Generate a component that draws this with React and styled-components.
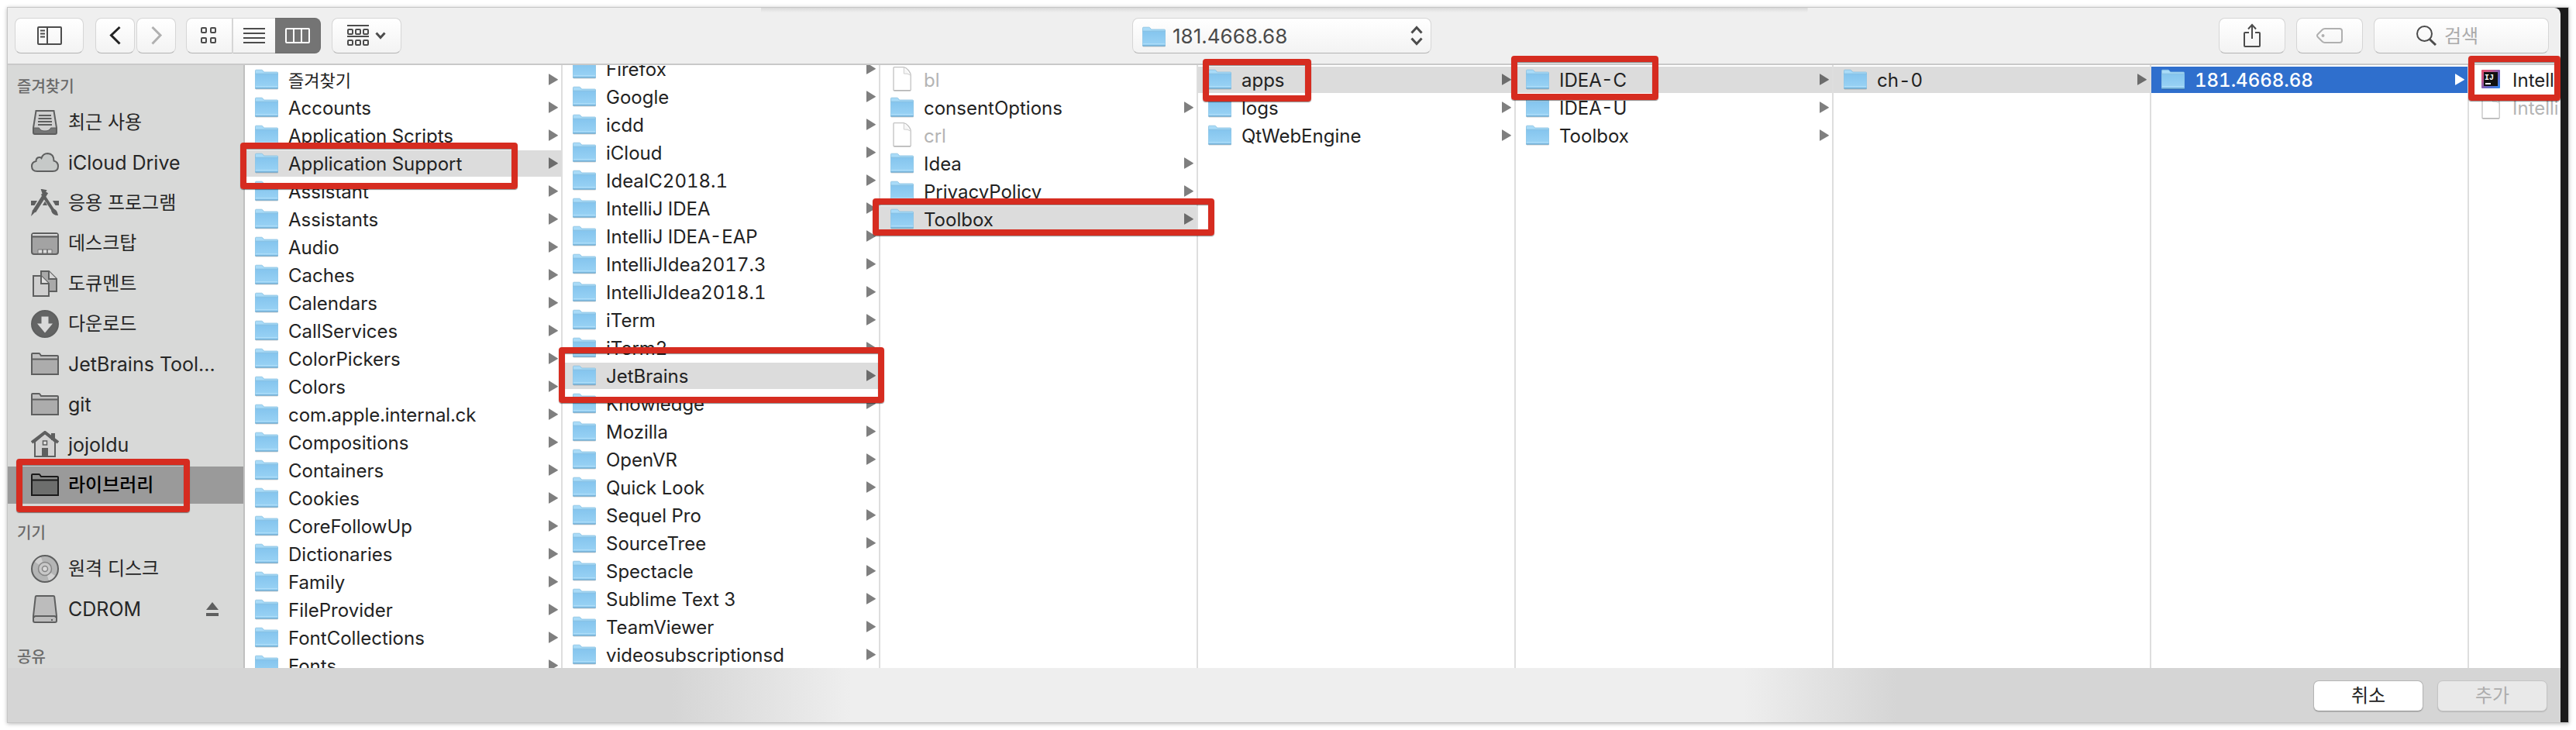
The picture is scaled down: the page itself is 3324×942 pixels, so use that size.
import React from "react";
import styled, { createGlobalStyle, css } from "styled-components";

const GlobalStyle = createGlobalStyle`
  *, *::before, *::after { box-sizing: border-box; }
  body { margin: 0; background: #fff; }
  body, button, input, select {
    font-family: Inter, "Noto Sans CJK KR", sans-serif;
  }
`;

const Page = styled.div`
  height: 100vh;
  min-height: 400px;
  padding: 10px;
  overflow: hidden;
`;

const Window = styled.main`
  height: 100%;
  display: flex;
  flex-direction: column;
  background: #1b1b1b;
  border-right: 10px solid #1b1b1b;
  box-shadow: 0 0 0 1px #c6c6c6, 0 1px 5px 1px rgba(0, 0, 0, 0.28);
`;

/* Toolbar */

const Toolbar = styled.header`
  flex: none;
  height: 74px;
  display: grid;
  grid-template-columns: 1fr auto 1fr;
  align-items: center;
  padding: 0 15px 0 9px;
  border-bottom: 2px solid #c9c9c9;
  border-top-right-radius: 8px;
  background:
    linear-gradient(#d9d9d9, #efefef) 50% 0 / 41% 6px no-repeat,
    #efefef;
`;

const ToolGroup = styled.div`
  display: flex;
  gap: ${(p) => p.$gap}px;
  justify-content: ${(p) => (p.$end ? "flex-end" : "flex-start")};
`;

const bezel = css`
  height: 46px;
  border: 1px solid #d6d6d6;
  border-bottom-color: #b4b4b4;
  border-radius: 8px;
  background: linear-gradient(#fff, #f3f3f3);
`;

const ToolButton = styled.button`
  ${bezel}
  width: ${(p) => p.$width}px;
  display: flex;
  align-items: center;
  justify-content: center;
  gap: 8px;
  padding: 0;
  color: ${(p) => (p.$dim ? "#b0b0b0" : "#4c4c4c")};
`;

const NavPair = styled.div`
  display: flex;
  gap: 2px;
  margin: 0 13px 0 15px;
`;

const Segments = styled.div`
  display: flex;
  margin-right: 14px;
`;

const Segment = styled(ToolButton)`
  border-radius: 0;
  border-left-width: ${(p) => (p.$first ? 1 : 0)}px;
  border-right-width: ${(p) => (p.$first ? 2 : p.$on ? 1 : 0)}px;
  ${(p) => p.$first && "border-radius: 8px 0 0 8px;"}
  ${(p) =>
    p.$on &&
    `border-radius: 0 8px 8px 0; background: #747474; border-color: #6c6c6c; color: #fff;`}
`;

const PathField = styled.label`
  ${bezel}
  width: 386px;
  display: flex;
  align-items: center;
  gap: 9px;
  padding: 0 10px 0 12px;
`;

const PathSelect = styled.select`
  appearance: none;
  flex: 1;
  min-width: 0;
  height: 40px;
  padding: 0;
  border: 0;
  outline: 0;
  background: transparent;
  color: #4a4a4a;
  font-size: 26px;
`;

const SearchField = styled.label`
  ${bezel}
  width: 226px;
  display: flex;
  align-items: center;
  gap: 10px;
  padding: 0 8px 0 54px;
  color: #4c4c4c;
`;

const SearchInput = styled.input`
  flex: 1;
  min-width: 0;
  height: 40px;
  padding: 0;
  border: 0;
  outline: 0;
  background: transparent;
  font-size: 24px;
  &::placeholder { color: #ababab; opacity: 1; }
`;

/* Sidebar */

const Body = styled.div`
  position: relative;
  flex: 1;
  min-height: 0;
  display: flex;
`;

const Sidebar = styled.nav`
  flex: none;
  width: 306px;
  padding-top: 6px;
  overflow: hidden;
  border-right: 2px solid #bfbfbf;
  background: #d8d9d8;
`;

const Section = styled.section`
  & + & { margin-top: 16px; }
`;

const SectionTitle = styled.h2`
  margin: 0;
  padding-left: 12px;
  height: 44px;
  line-height: 44px;
  font-size: 20px;
  font-weight: 500;
  color: #6a6a6a;
`;

const List = styled.ul`
  margin: 0;
  padding: 0;
  list-style: none;
`;

const Place = styled.li`
  display: flex;
  align-items: center;
  height: 48px;
  margin-bottom: 4px;
  padding: 0 32px 0 30px;
  background: ${(p) => (p.$on ? "#9a9a9a" : "transparent")};
  color: ${(p) => (p.$on ? "#1a1a1a" : "#5e5f5f")};
`;

const PlaceLink = styled.a`
  flex: 1;
  display: flex;
  align-items: center;
  gap: 12px;
  line-height: 48px;
  font-size: ${(p) => (p.$ko ? 24 : 25)}px;
  font-weight: ${(p) => (p.$on ? 500 : 400)};
  white-space: nowrap;
  text-decoration: none;
  color: inherit;
  span { color: ${(p) => (p.$on ? "#000" : "#262626")}; }
`;

const EjectButton = styled.button`
  display: flex;
  padding: 0;
  border: 0;
  background: none;
  color: inherit;
`;

/* Browser columns */

const Columns = styled.div`
  flex: 1;
  min-width: 0;
  display: flex;
  overflow: hidden;
  background: #fff;
`;

const Column = styled.section`
  flex: none;
  width: 410px;
  overflow: hidden;
  border-right: 2px solid #dedede;
  &:last-child { flex: 1; width: auto; min-width: 0; border-right: 0; }
`;

const Entries = styled(List)`
  margin-top: ${(p) => 2 - p.$scrolled}px;
`;

const Entry = styled.li`
  margin-bottom: 2px;
`;

const rowTone = {
  plain: "background: transparent; color: #222;",
  dim: "background: transparent; color: #b4b4b4;",
  path: "background: #dcdcdc; color: #222;",
  active: "background: #2f6fcd; color: #fff; font-weight: 500;",
};

const EntryButton = styled.button`
  width: 100%;
  height: 34px;
  display: flex;
  align-items: center;
  gap: 13px;
  padding: 0 4px 0 13px;
  border: 0;
  text-align: left;
  line-height: 34px;
  font-size: ${(p) => (p.$ko ? 22 : 24)}px;
  font-variant-numeric: tabular-nums;
  white-space: nowrap;
  ${(p) => rowTone[p.$tone]}
`;

const IconSlot = styled.span`
  flex: none;
  width: 30px;
  height: 34px;
  display: flex;
  justify-content: center;
  svg { display: block; overflow: visible; }
`;

const EntryName = styled.span`
  flex: 1;
  min-width: 0;
  padding-top: 2px;
  overflow: hidden;
`;

/* Footer */

const Footer = styled.footer`
  flex: none;
  height: 70px;
  display: flex;
  align-items: center;
  justify-content: flex-end;
  gap: 18px;
  padding: 2px 17px 0 0;
  background: linear-gradient(
    90deg,
    #d5d5d5 26%,
    #eee 33%,
    #eee 68%,
    #d5d5d5 74%
  );
`;

const DialogButton = styled.button`
  width: 142px;
  height: 40px;
  padding: 0;
  border: 1px solid #b4b4b4;
  border-bottom-color: #989898;
  border-radius: 7px;
  background: #fff;
  font-size: 24px;
  line-height: 36px;
  color: #222;
  box-shadow: 0 1px 1px rgba(0, 0, 0, 0.14);
  &:disabled {
    background: #e9e9e9;
    border-color: #c4c4c4;
    color: #adadad;
  }
`;

/* Red callout frames drawn over the browser */

const Callout = styled.div`
  position: absolute;
  left: ${(p) => p.$x}px;
  top: ${(p) => p.$y}px;
  width: ${(p) => p.$w}px;
  height: ${(p) => p.$h}px;
  border: 8px solid #d62c20;
  border-radius: 4px;
  pointer-events: none;
  box-shadow: 0 1px 1px rgba(0, 0, 0, 0.45), inset 0 1px 1px rgba(0, 0, 0, 0.45);
`;

/* Icons */

const Folder = ({ size = 30 }) => (
  <svg width={size} height={size} viewBox="0 0 30 30" aria-hidden="true">
    <defs>
      <linearGradient id="folderFace" x1="0" y1="0" x2="0" y2="1">
        <stop offset="0" stopColor="#85c5ee" />
        <stop offset="1" stopColor="#9ad3f5" />
      </linearGradient>
    </defs>
    <path d="M1 28.8H29.5" stroke="#000" strokeOpacity=".18" strokeWidth="1.4" />
    <path d="M.5 28V5.2Q.5 4.2 1.5 4.2H8.6Q9.4 4.2 10 5L11.6 7H28.5Q29.5 7 29.5 8V28Z" fill="#a9dbf8" stroke="#86bfe0" strokeWidth=".8" />
    <path d="M.5 9.6H29.5V28H.5Z" fill="url(#folderFace)" />
    <path d="M.5 9.2H29.5" stroke="#79b5da" strokeWidth=".8" />
    <path d="M1 25.5H29" stroke="#b4e0f9" strokeWidth=".8" />
    <path d="M.2 28H29.8" stroke="#6ba6cb" strokeWidth="1.2" />
  </svg>
);

const Doc = () => (
  <svg width="24" height="32" viewBox="0 0 24 32" aria-hidden="true">
    <path d="M1 1.5Q1 .7 1.8 .7H14Q17 1 20 4.5Q23.2 8.5 23.2 11V30Q23.2 30.7 22.5 30.7H1.7Q1 30.7 1 30Z" fill="#fff" stroke="#c2c2c2" strokeWidth="1.3" />
    <path d="M14.3 1V9Q19 8.5 23 11" fill="#f6f6f6" stroke="#cfcfcf" />
    <path d="M1.5 31H22.8" stroke="#a8a8a8" />
  </svg>
);

const IdeaApp = () => (
  <svg width="24" height="30" viewBox="0 0 24 30" aria-hidden="true">
    <defs>
      <linearGradient id="ideaEdge" x1="0" y1="0" x2="1" y2="1">
        <stop offset="0" stopColor="#e8506a" />
        <stop offset=".3" stopColor="#c2588c" />
        <stop offset=".6" stopColor="#6a62c0" />
        <stop offset="1" stopColor="#2c8cf4" />
      </linearGradient>
    </defs>
    <rect y="4" width="24" height="24" rx="1" fill="url(#ideaEdge)" />
    <rect x="3" y="7" width="18" height="18" fill="#111" />
    <text x="4" y="17" fontFamily="Liberation Mono, monospace" fontWeight="700" fontSize="10" fill="#fff">IJ</text>
    <rect x="5" y="21" width="7" height="2" fill="#fff" />
  </svg>
);

const Arrow = () => (
  <svg width="12" height="16" viewBox="0 0 12 16" aria-hidden="true">
    <path d="M0 .8Q0 0 .8 .5L11.6 7.3Q12.3 7.8 11.6 8.3L.8 14.4Q0 15 0 14Z" fill="currentColor" />
  </svg>
);

const ArrowTone = styled.span`
  display: flex;
  color: ${(p) => (p.$tone === "active" ? "#fff" : p.$tone === "path" ? "#6c6c6c" : "#7f7f7f")};
`;

const Line = ({ w, h, sw = 2, children }) => (
  <svg width={w} height={h} viewBox={`0 0 ${w} ${h}`} fill="none" stroke="currentColor" strokeWidth={sw} aria-hidden="true">
    {children}
  </svg>
);

const SidebarToggleIcon = () => (
  <Line w={32} h={24}>
    <rect x="1" y="1" width="30" height="22" rx="1" />
    <path d="M13 1V23M4 5.5H10M4 9.5H10M4 13.5H10" />
  </Line>
);

const BackIcon = () => (
  <Line w={16} h={26} sw={3}>
    <path d="M13.5 2L2.5 12.5L13.5 23.5" stroke="#222" />
  </Line>
);

const ForwardIcon = () => (
  <Line w={16} h={26} sw={3}>
    <path d="M2.5 2L13 12.5L2.5 23.5" />
  </Line>
);

const GridIcon = () => (
  <Line w={22} h={22}>
    {[1, 13].map((x) =>
      [1, 14].map((y) => <rect key={`${x}${y}`} x={x} y={y} width="6" height="6" rx="1" />)
    )}
  </Line>
);

const ListIcon = () => (
  <Line w={28} h={20}>
    <path d="M0 1H28M0 7H28M0 13H28M0 19H28" />
  </Line>
);

const ColumnsIcon = () => (
  <Line w={32} h={20}>
    <rect x="1" y="1" width="30" height="18" rx="1" />
    <path d="M11 1V19M21 1V19" />
  </Line>
);

const ArrangeIcon = () => (
  <Line w={28} h={28}>
    <path d="M0 1H28M0 15H28" />
    {[1, 11, 21].map((x) =>
      [6, 20].map((y) => <rect key={`${x}${y}`} x={x} y={y} width="6" height="6" rx="1" />)
    )}
  </Line>
);

const ChevronIcon = () => (
  <Line w={14} h={10} sw={3}>
    <path d="M1.5 1.5L7 7.5L12.5 1.5" />
  </Line>
);

const UpDownIcon = () => (
  <Line w={16} h={26} sw={3}>
    <path d="M1.5 9.5L8 2.5L14.5 9.5M1.5 16.5L8 23.5L14.5 16.5" stroke="#4c4c4c" />
  </Line>
);

const ShareIcon = () => (
  <Line w={22} h={32}>
    <path d="M7 12H2Q1 12 1 13V29Q1 30 2 30H20Q21 30 21 29V13Q21 12 20 12H15M11 20V2M6 7.5L11 2L16 7.5" />
  </Line>
);

const TagIcon = () => (
  <Line w={34} h={20}>
    <path d="M11 1H30Q33 1 33 4V16Q33 19 30 19H11Q9 19 7.5 17.5L2 12Q0 10 2 8L7.500 2.500Q9 1 11 1Z" />
    <circle cx="8.500" cy="10" r="2" fill="currentColor" stroke="none" />
  </Line>
);

const SearchIcon = () => (
  <Line w={26} h={26}>
    <circle cx="10.500" cy="10.500" r="9.500" />
    <path d="M17 17.500L25 25" strokeWidth="3" />
  </Line>
);

const placeShapes = {
  recent: (
    <>
      <path d="M6.500 3H29.500L33 25V31Q33 33 31 33H5Q3 33 3 31V25Z" fill="#d0d0d0" />
      <path d="M3 25H10.500Q12 29 18 29Q24 29 25.500 25H33V31Q33 33 31 33H5Q3 33 3 31Z" fill="currentColor" fillOpacity=".8" strokeWidth="1" />
      <path d="M10 9H26M9.500 13H26.500M9 17H27M9 21H27" />
    </>
  ),
  cloud: (
    <path d="M8 29Q1 29 1 22.500Q1 17 6.500 16Q6.500 11.500 10.500 11Q12.500 10.800 13.500 12Q15.500 6 21.500 6Q29.500 6.500 29.500 15.500Q35 17 35 22.500Q35 29 28 29Z" fill="#c6c9c8" />
  ),
  apps: (
    <>
      <path d="M0 18H36" strokeWidth="6" />
      <path d="M19 5L4.500 30" stroke="#d8d9d8" strokeWidth="9" />
      <path d="M17 5L31.500 30" stroke="#d8d9d8" strokeWidth="9" />
      <path d="M14.500 6L29 28" strokeWidth="4" />
      <path d="M20 4L4 29" strokeWidth="5" />
      <path d="M28 25Q34 26 35 34Q28 34 26 28Z" fill="currentColor" stroke="none" />
      <path d="M2 27L6 29L0 35Z" fill="currentColor" stroke="none" />
      <path d="M14 1L19 2L16 7Z" fill="currentColor" />
    </>
  ),
  desktop: (
    <>
      <rect x="1" y="5" width="34" height="27" rx="3" fill="#a3a3a3" />
      <path d="M2 6H34V8H2Z" fill="#dadada" stroke="none" />
      <path d="M1 9.500H35" />
      <path d="M9 26H27V31H9Z" fill="#dcdcdc" stroke="#777" strokeWidth="1" />
      <path d="M15 26V31M21 26V31" strokeWidth="1.500" />
    </>
  ),
  documents: (
    <>
      <path d="M13 2H23L33 12V28H13Z" fill="#a9a9a9" />
      <path d="M23 2V12H33" fill="#d6d6d6" />
      <path d="M3 8H13L23 18V34H3Z" fill="#cfcfcf" />
      <path d="M13 8V18H23" fill="#e0e0e0" />
    </>
  ),
  downloads: (
    <>
      <circle cx="18" cy="18" r="17" fill="#636464" />
      <path d="M13.500 8.500H22.500V17.500H28L18 29.500L8 17.500H13.500Z" fill="#dadada" stroke="none" />
    </>
  ),
  folder: (
    <>
      <path d="M1 31V5Q1 4 2 4H10Q11 4 11.500 4.800L13 7H34Q35 7 35 8V31Z" fill="#c0c0c0" />
      <path d="M1 11.500H35V31H1Z" fill="#acacac" />
    </>
  ),
  openFolder: (
    <>
      <path d="M1 31V5Q1 4 2 4H10Q11 4 11.500 4.800L13 7H34Q35 7 35 8V31Z" fill="#8a8b8a" />
      <path d="M1 11.500H35V31H1Z" fill="#6d6e6d" />
    </>
  ),
  home: (
    <>
      <path d="M5 14L18 3L31 14V33H5Z" fill="#d2d2d2" />
      <path d="M1 15L18 2L35 15" strokeWidth="4" />
      <path d="M28.500 3V12" strokeWidth="5" />
      <path d="M14 22H22V33H14Z" fill="currentColor" stroke="none" />
      <rect x="15.500" y="13" width="5" height="5" fill="#e4e4e4" strokeWidth="1.500" />
    </>
  ),
  disc: (
    <>
      <circle cx="18" cy="18" r="17" fill="#b4b5b5" />
      <path d="M18 18L5 9Q8 4 13 3Z" fill="#cfcfcf" stroke="none" />
      <path d="M18 18L31 27Q28 32 23 33Z" fill="#d2d2d2" stroke="none" />
      <circle cx="18" cy="18" r="8.500" fill="#c8c8c8" strokeWidth="1.500" stroke="#858585" />
      <circle cx="18" cy="18" r="3.500" fill="#dadada" strokeWidth="1.500" stroke="#858585" />
    </>
  ),
  drive: (
    <>
      <path d="M7 1H29Q30 1 30.200 2L33 27V33Q33 35 31 35H5Q3 35 3 33V27L5.800 2Q6 1 7 1Z" fill="#bcbcbc" />
      <path d="M4 29Q4 27 6 27H30Q32 27 32 29" />
      <rect x="26" y="31" width="2" height="2" fill="currentColor" stroke="none" />
    </>
  ),
};

const PlaceIcon = ({ kind }) => (
  <Line w={36} h={36}>{placeShapes[kind]}</Line>
);

const EjectIcon = () => (
  <svg width="16" height="18" viewBox="0 0 16 18" fill="currentColor" aria-hidden="true">
    <path d="M8 0L16 10H0ZM0 14H16V18H0Z" />
  </svg>
);

/* Data */

const hasHangul = (s) => /[\uac00-\ud7a3]/.test(s);

const sections = [
  {
    title: "즐겨찾기",
    places: [
      ["recent", "최근 사용"],
      ["cloud", "iCloud Drive"],
      ["apps", "응용 프로그램"],
      ["desktop", "데스크탑"],
      ["documents", "도큐멘트"],
      ["downloads", "다운로드"],
      ["folder", "JetBrains Tool..."],
      ["folder", "git"],
      ["home", "jojoldu"],
      ["openFolder", "라이브러리"],
    ],
  },
  { title: "기기", places: [["disc", "원격 디스크"], ["drive", "CDROM"]] },
  { title: "공유", places: [] },
];

const folders = (names) => names.map((name) => ({ name }));

const columns = [
  {
    label: "라이브러리",
    selected: "Application Support",
    entries: folders([
      "즐겨찾기", "Accounts", "Application Scripts", "Application Support", "Assistant",
      "Assistants", "Audio", "Caches", "Calendars", "CallServices", "ColorPickers",
      "Colors", "com.apple.internal.ck", "Compositions", "Containers", "Cookies",
      "CoreFollowUp", "Dictionaries", "Family", "FileProvider", "FontCollections", "Fonts",
    ]),
  },
  {
    label: "Application Support",
    scrolled: 14,
    selected: "JetBrains",
    entries: folders([
      "Firefox", "Google", "icdd", "iCloud", "IdeaIC2018.1", "IntelliJ IDEA",
      "IntelliJ IDEA-EAP", "IntelliJIdea2017.3", "IntelliJIdea2018.1", "iTerm", "iTerm2",
      "JetBrains", "Knowledge", "Mozilla", "OpenVR", "Quick Look", "Sequel Pro",
      "SourceTree", "Spectacle", "Sublime Text 3", "TeamViewer", "videosubscriptionsd",
    ]),
  },
  {
    label: "JetBrains",
    selected: "Toolbox",
    entries: [
      { name: "bl", kind: "doc" },
      { name: "consentOptions" },
      { name: "crl", kind: "doc" },
      { name: "Idea" },
      { name: "PrivacyPolicy" },
      { name: "Toolbox" },
    ],
  },
  { label: "Toolbox", selected: "apps", entries: folders(["apps", "logs", "QtWebEngine"]) },
  { label: "apps", selected: "IDEA-C", entries: folders(["IDEA-C", "IDEA-U", "Toolbox"]) },
  { label: "IDEA-C", selected: "ch-0", entries: folders(["ch-0"]) },
  { label: "ch-0", active: "181.4668.68", entries: folders(["181.4668.68"]) },
  {
    label: "181.4668.68",
    entries: [
      { name: "IntelliJ IDEA CE", kind: "app" },
      { name: "IntelliJ IDEA CE.vmoptions", kind: "doc" },
    ],
  },
];

const callouts = [
  [11, 508, 224, 69],
  [300, 100, 358, 60],
  [711, 364, 420, 72],
  [1116, 172, 441, 48],
  [1542, -8, 140, 55],
  [1940, -12, 190, 57],
  [3175, -12, 119, 58],
];

const entryIcons = { folder: Folder, doc: Doc, app: IdeaApp };

function FileRow({ name, kind = "folder", tone }) {
  const Icon = entryIcons[kind];
  return (
    <Entry>
      <EntryButton type="button" $tone={tone} $ko={hasHangul(name)}>
        <IconSlot><Icon /></IconSlot>
        <EntryName>{name}</EntryName>
        {kind === "folder" && <ArrowTone $tone={tone}><Arrow /></ArrowTone>}
      </EntryButton>
    </Entry>
  );
}

function FileColumn({ label, entries, selected, active, scrolled = 0 }) {
  const toneOf = ({ name, kind }) => {
    if (name === active) return "active";
    if (name === selected) return "path";
    return kind === "doc" ? "dim" : "plain";
  };
  return (
    <Column aria-label={label}>
      <Entries $scrolled={scrolled}>
        {entries.map((e) => <FileRow key={e.name} {...e} tone={toneOf(e)} />)}
      </Entries>
    </Column>
  );
}

export default function App() {
  return (
    <Page>
      <GlobalStyle />
      <Window>
        <Toolbar>
          <ToolGroup $gap={0}>
            <ToolButton type="button" $width={89} aria-label="사이드바"><SidebarToggleIcon /></ToolButton>
            <NavPair>
              <ToolButton type="button" $width={51} aria-label="뒤로"><BackIcon /></ToolButton>
              <ToolButton type="button" $width={51} $dim disabled aria-label="앞으로"><ForwardIcon /></ToolButton>
            </NavPair>
            <Segments>
              <Segment type="button" $width={61} $first aria-label="아이콘"><GridIcon /></Segment>
              <Segment type="button" $width={54} aria-label="목록"><ListIcon /></Segment>
              <Segment type="button" $width={59} $on aria-label="계층"><ColumnsIcon /></Segment>
            </Segments>
            <ToolButton type="button" $width={90} aria-label="정렬"><ArrangeIcon /><ChevronIcon /></ToolButton>
          </ToolGroup>

          <PathField>
            <Folder />
            <PathSelect aria-label="위치" defaultValue="181.4668.68">
              <option>181.4668.68</option>
            </PathSelect>
            <UpDownIcon />
          </PathField>

          <ToolGroup $gap={14} $end>
            <ToolButton type="button" $width={86} aria-label="공유"><ShareIcon /></ToolButton>
            <ToolButton type="button" $width={86} $dim disabled aria-label="태그"><TagIcon /></ToolButton>
            <SearchField>
              <SearchIcon />
              <SearchInput type="text" placeholder="검색" aria-label="검색" />
            </SearchField>
          </ToolGroup>
        </Toolbar>

        <Body>
          <Sidebar>
            {sections.map((s) => (
              <Section key={s.title}>
                <SectionTitle>{s.title}</SectionTitle>
                <List>
                  {s.places.map(([kind, name]) => {
                    const on = kind === "openFolder";
                    return (
                      <Place key={name} $on={on}>
                        <PlaceLink href="#" $ko={hasHangul(name)} $on={on}>
                          <PlaceIcon kind={kind} />
                          <span>{name}</span>
                        </PlaceLink>
                        {kind === "drive" && (
                          <EjectButton type="button" aria-label="추출"><EjectIcon /></EjectButton>
                        )}
                      </Place>
                    );
                  })}
                </List>
              </Section>
            ))}
          </Sidebar>
          <Columns>
            {columns.map((c) => <FileColumn key={c.label} {...c} />)}
          </Columns>
          {callouts.map(([x, y, w, h]) => (
            <Callout key={`${x}-${y}`} $x={x} $y={y} $w={w} $h={h} />
          ))}
        </Body>

        <Footer>
          <DialogButton type="button">취소</DialogButton>
          <DialogButton type="button" disabled>추가</DialogButton>
        </Footer>
      </Window>
    </Page>
  );
}
